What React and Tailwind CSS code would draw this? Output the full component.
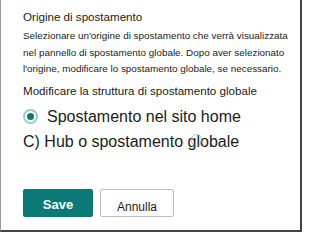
export default function App() {
  return (
    <div
      className="relative w-[302px] h-[232px] bg-white border-l border-r-2 border-b-2 border-l-[#9a9a9a] border-r-[#444] border-b-[#444] pl-[22px] pt-[9px] text-[#1b1b1b]"
      style={{ fontFamily: '"Liberation Sans", Arial, sans-serif' }}
    >
      <p className="text-[11.6px] leading-[16px] whitespace-nowrap">Origine di spostamento</p>

      <div className="mt-[3px] text-[9.9px] leading-[16.6px] whitespace-nowrap">
        <p>Selezionare un'origine di spostamento che verrà visualizzata</p>
        <p>nel pannello di spostamento globale. Dopo aver selezionato</p>
        <p>l'origine, modificare lo spostamento globale, se necessario.</p>
      </div>

      <p className="mt-[5px] text-[11.6px] leading-[16px] whitespace-nowrap">
        Modificare la struttura di spostamento globale
      </p>

      {/* radio options */}
      <div className="mt-[8px] flex items-center gap-[9px] h-[20px]">
        <span className="flex items-center justify-center w-[15px] h-[15px] rounded-full border-2 border-[#9cc9c8]">
          <span className="w-[7px] h-[7px] rounded-full bg-[#0b7a77]" />
        </span>
        <span className="text-[16px] leading-[20px] whitespace-nowrap">Spostamento nel sito home</span>
      </div>
      <div className="relative mt-[5px] h-[20px] flex items-center">
        <span className="text-[16px] leading-[20px] whitespace-nowrap">C) Hub o spostamento globale</span>
        <span className="absolute left-[168px] top-[2px] w-[11px] h-[12px] rounded-full border border-[#7fb2b3]/70" />
      </div>

      <div className="mt-[37px] flex gap-[7px]">
        <button className="w-[70px] h-[28px] rounded-[2px] bg-[#0b7a77] text-white text-[13px] font-bold pt-[3px]">
          Save
        </button>
        <button className="w-[74px] h-[28px] rounded-[2px] border border-[#bdbdbd] bg-white text-[12px] pt-[8px] leading-[14px]">
          Annulla
        </button>
      </div>
    </div>
  );
}
